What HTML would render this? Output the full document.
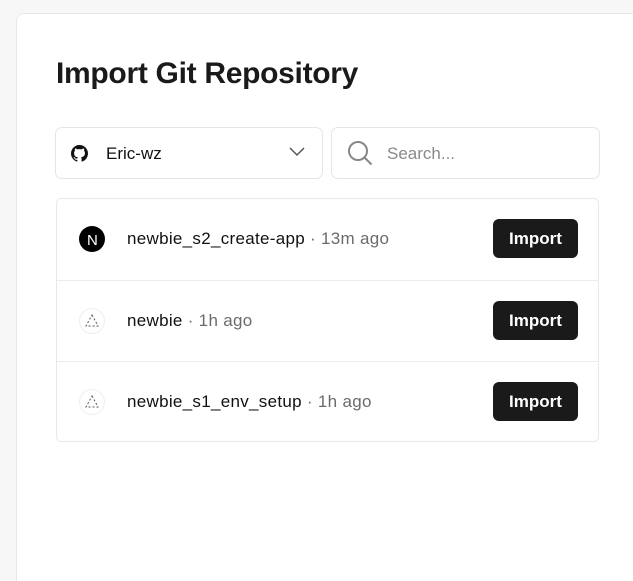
<!DOCTYPE html>
<html><head><style>
html,body{margin:0;width:633px;height:581px;overflow:hidden}
body{background:#f7f7f7;font-family:"Liberation Sans",sans-serif;position:relative}
.card{position:absolute;left:16px;top:13px;width:616px;height:568px;background:#fff;border:1px solid #e8e8e8;border-right:none;border-bottom:none;border-radius:8px 0 0 0}
h1{position:absolute;left:56px;top:57px;margin:0;font-size:30px;font-weight:700;color:#1a1a1a;letter-spacing:-0.3px}
.box{position:absolute;top:127px;height:50px;border:1px solid #e5e5e5;border-radius:7px;background:#fff}
.list{position:absolute;left:56px;top:198px;width:541px;height:242px;border:1px solid #e8e8e8;border-radius:5px}
.row{position:absolute;left:0;width:541px;height:80px}
.row+.row{border-top:1px solid #ececec}
.ic{position:absolute;left:22px;top:27px;width:26px;height:26px;border-radius:50%}
.name{position:absolute;left:70px;top:30px;font-size:17px;color:#111;letter-spacing:0.3px}
.name span{color:#6b6b6b}
.btn{position:absolute;left:436px;top:20px;width:85px;height:39px;background:#1a1a1a;border-radius:6px;color:#fff;font-size:17px;font-weight:700;text-align:center;line-height:39px}
</style></head><body>
<div class="card"></div>
<h1>Import Git Repository</h1>
<div class="box" style="left:55px;width:266px">
<svg style="position:absolute;left:15px;top:17px" width="17" height="17" viewBox="0 0 16 16"><path fill="#111" d="M8 0C3.58 0 0 3.58 0 8c0 3.540 2.29 6.53 5.47 7.59.4.07.55-.17.55-.38v-1.33c-2.230.48-2.7-1.070-2.7-1.07-.36-.92-.89-1.17-.89-1.17-.73-.5.06-.49.06-.49.8.06 1.23.83 1.23.83.72 1.22 1.87.87 2.33.66.07-.52.28-.87.51-1.07-1.78-.2-3.64-.89-3.64-3.95 0-.87.31-1.59.82-2.15-.08-.2-.36-1.02.08-2.12 0 0 .67-.21 2.2.82A7.6 7.6 0 0 1 8 3.86c.68 0 1.36.09 2 .27 1.53-1.04 2.2-.82 2.2-.82.44 1.1.16 1.92.08 2.12.51.56.82 1.27.82 2.15 0 3.07-1.87 3.75-3.65 3.95.29.25.54.73.54 1.48v2.2c0 .21.15.46.55.38A8 8 0 0 0 16 8c0-4.42-3.58-8-8-8z"/></svg>
<div style="position:absolute;left:50px;top:16px;font-size:17px;color:#111">Eric-wz</div>
<svg style="position:absolute;left:233px;top:19px" width="16" height="10"><path d="M1 1l7 7 7-7" stroke="#555" stroke-width="1.5" fill="none"/></svg>
</div>
<div class="box" style="left:331px;width:267px">
<svg style="position:absolute;left:14px;top:11px" width="28" height="28"><circle cx="12" cy="12" r="9" stroke="#888" stroke-width="2" fill="none"/><path d="M18.5 18.5l7 7" stroke="#888" stroke-width="2"/></svg>
<div style="position:absolute;left:55px;top:16px;font-size:17px;color:#8a8a8a">Search...</div>
</div>
<div class="list">
<div class="row" style="top:0">
<div class="ic" style="background:#000"><svg width="26" height="26"><text x="8" y="19" fill="#fff" font-size="15" font-family="Liberation Sans">N</text></svg></div>
<div class="name">newbie_s2_create-app <span>· 13m ago</span></div><div class="btn">Import</div></div>
<div class="row" style="top:81px">
<div class="ic" style="border:1px solid #eee;width:24px;height:24px"><svg width="24" height="24"><path d="M12 6L18 17H6Z" stroke="#555" stroke-dasharray="2 2" fill="none"/></svg></div>
<div class="name">newbie <span>· 1h ago</span></div><div class="btn">Import</div></div>
<div class="row" style="top:162px">
<div class="ic" style="border:1px solid #eee;width:24px;height:24px"><svg width="24" height="24"><path d="M12 6L18 17H6Z" stroke="#555" stroke-dasharray="2 2" fill="none"/></svg></div>
<div class="name">newbie_s1_env_setup <span>· 1h ago</span></div><div class="btn">Import</div></div>
</div>
</body></html>
